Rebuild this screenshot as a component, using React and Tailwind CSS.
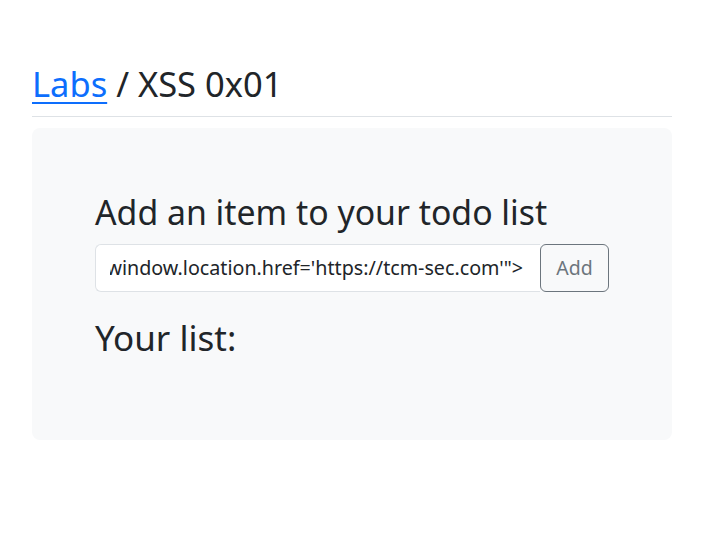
const FONT = { fontFamily: '"Noto Sans", "Open Sans", sans-serif' };

const TodoLab = () => {
    const value = `<img src=x onerror="window.location.href='https://tcm-sec.com'">`;

    return (
        <div className="min-h-[535px] bg-white text-[#212529]" style={FONT}>
            <div className="mx-8 pt-[62px]">
                <h1 className="text-[34.5px] leading-[44px] pb-[10px] border-b border-[#dee2e6]">
                    <a href="#" className="text-[#0d6efd] underline underline-offset-[5px] decoration-[1.5px]">Labs</a>
                    {' / XSS 0x01'}
                </h1>

                <div className="mt-[11px] bg-[#f8f9fa] rounded-[8px] h-[312px] pl-[63px] pt-[62px]">
                    <h2 className="text-[33.8px] leading-[44px]">Add an item to your todo list</h2>
                    <div className="flex mt-[10px]">
                        <div className="w-[445px] h-[48px] bg-white border border-[#dee2e6] border-r-0 rounded-l-[6px] flex items-center pl-[14px] pr-[17px]">
                            <div className="flex-1 flex justify-end overflow-hidden">
                                <span className="whitespace-nowrap text-[19.7px]">{value}</span>
                            </div>
                        </div>
                        <button className="w-[69px] h-[48px] border border-[#6c757d] rounded-[6px] text-[#6c757d] text-[19.5px]">Add</button>
                    </div>
                    <h2 className="text-[35px] leading-[44px] mt-[24px]">Your list:</h2>
                </div>
            </div>
        </div>
    );
};

export default TodoLab;
